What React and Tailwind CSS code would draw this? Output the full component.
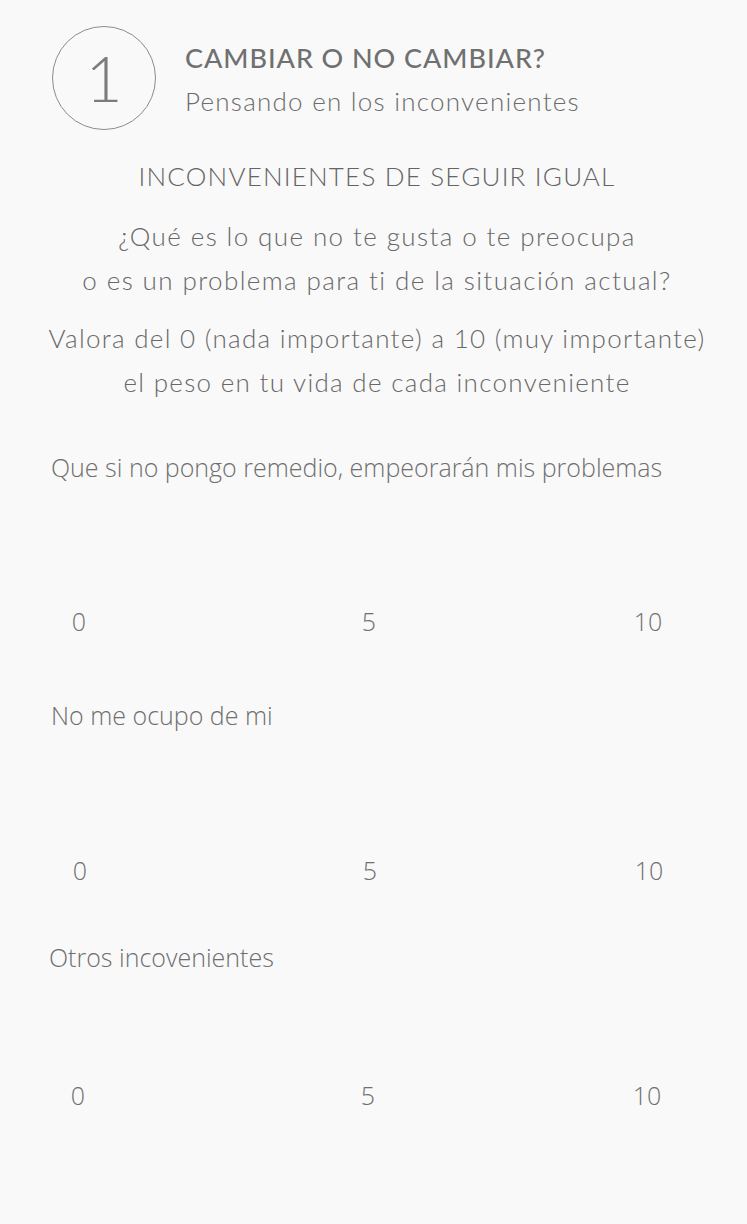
export default function App() {
  const head = { fontFamily: "Lato, 'Noto Sans', sans-serif" };
  const body = { fontFamily: "'Open Sans', 'Noto Sans', sans-serif" };
  const rows = [
    { label: "Que si no pongo remedio, empeorarán mis problemas", mt: "mt-[47px]", gap: "mt-[122px]", pl: "pl-[51px]" },
    { label: "No me ocupo de mi", mt: "mt-[62px]", gap: "mt-[123px]", pl: "pl-[51px]" },
    { label: "Otros incovenientes", mt: "mt-[55px]", gap: "mt-[106px]", pl: "pl-[49px]" },
  ];
  return (
    <div className="min-h-[1224px] w-[747px] bg-[#f9f9f9] text-[#777777]">
      <div className="flex items-start pl-[52px] pt-[26px]" style={head}>
        <div className="flex h-[104px] w-[104px] items-center justify-center rounded-full border border-[#8c8c8c]">
          <span className="text-[64px] font-light leading-none text-[#7c7c7c]">1</span>
        </div>
        <div className="ml-[29px] mt-[15px]">
          <div className="text-[27px] font-medium leading-[34px] tracking-[0.95px] text-[#707070]">CAMBIAR O NO CAMBIAR?</div>
          <div className="mt-[9px] text-[26px] font-light leading-[34px] tracking-[1.25px] text-[#6c6c6c]">Pensando en los inconvenientes</div>
        </div>
      </div>
      <div className="pl-[7px]">
        <div className="mt-[28px] text-center text-[26px] font-light leading-[36px] tracking-[1.2px] text-[#646464]" style={head}>
          INCONVENIENTES DE SEGUIR IGUAL
        </div>
        <div className="mt-[20px] text-center text-[26px] font-light leading-[44px] tracking-[1.4px] text-[#686868]" style={head}>
          <div>¿Qué es lo que no te gusta o te preocupa</div>
          <div>o es un problema para ti de la situación actual?</div>
        </div>
        <div className="mt-[14px] text-center text-[26px] font-light leading-[44px] tracking-[1.3px] text-[#686868]" style={head}>
          <div>Valora del 0 (nada importante) a 10 (muy importante)</div>
          <div>el peso en tu vida de cada inconveniente</div>
        </div>
      </div>
      {rows.map((r, i) => (
        <div key={i} className={r.mt} style={body}>
          <div className={`${r.pl} text-[25px] font-light leading-[32px] text-[#6f6f6f]`}>{r.label}</div>
          <div className={`${r.gap} flex text-[25px] font-light leading-[32px] text-[#707070]`}>
            <div className={`${i === 2 ? "ml-[58px]" : i === 1 ? "ml-[60px]" : "ml-[59px]"} w-[40px] text-center`}>0</div>
            <div className="ml-[250px] w-[40px] text-center">5</div>
            <div className="ml-[239px] w-[40px] text-center">10</div>
          </div>
        </div>
      ))}
    </div>
  );
}
